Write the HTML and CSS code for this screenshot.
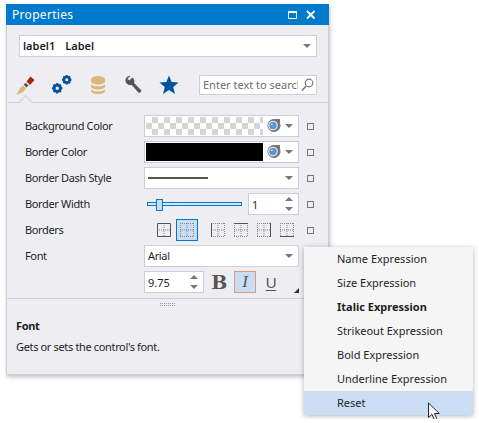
FILE: index.html

```html
<!DOCTYPE html>
<html lang="en">
<head>
    <meta charset="UTF-8">
    <title>Properties</title>
    <link rel="stylesheet" href="styles.css">
</head>
<body>
    <div class="panel">
        <div class="titlebar">
            <span class="title">Properties</span>
            <svg class="win-icons" width="38" height="12" viewBox="0 0 38 12">
                <path d="M1.500 2.500h8v7h-8z" fill="none" stroke="#fff" stroke-width="1"/>
                <path d="M1 3h9" stroke="#fff" stroke-width="2"/>
                <path d="M20 2l7.500 7.500M27.500 2L20 9.500" stroke="#fff" stroke-width="1.800"/>
            </svg>
        </div>

        <div class="combo combo-top">
            <b class="obj-name">label1</b><span class="obj-type">Label</span>
            <i class="arrow"></i>
        </div>

        <div class="tabs">
            <svg class="tab tab-brush" width="22" height="22" viewBox="0 0 22 22">
                <path d="M15.500 2.500l4 3.500-4.500 5-3.500-3.500z" fill="#a1260d"/>
                <path d="M10.500 8.800l3 2.800-1.800 1.900-3-2.800z" fill="#555"/>
                <path d="M8 11.500l3 2.700c-1.500 3-5 5.800-10 6.300 2.500-2 3-6.800 7-9z" fill="#dcb67a"/>
            </svg>
            <svg class="tab tab-gears" width="21" height="21" viewBox="0 0 22 22">
                <g fill="none" stroke="#00539c">
                    <circle cx="6.500" cy="15" r="3.300" stroke-width="3"/>
                    <path d="M6.500 9.500v2M6.500 18.500v2M1 15h2M10 15h2M2.600 11.100l1.400 1.400M9 17.500l1.400 1.400M2.600 18.900L4 17.500M9 12.500l1.400-1.400" stroke-width="2"/>
                    <circle cx="16.500" cy="6" r="3" stroke-width="2.800"/>
                    <path d="M16.500 1v2M16.500 9v2M11.500 6h2M19.500 6h2M13 2.500l1.300 1.300M18.700 8.200L20 9.500M13 9.500l1.300-1.300M18.700 3.800L20 2.500" stroke-width="2"/>
                </g>
            </svg>
            <svg class="tab tab-db" width="16" height="20" viewBox="0 0 16 20">
                <ellipse cx="8" cy="4.500" rx="7" ry="3.500" fill="#dcb67a"/>
                <path d="M1 5h14v1.500c0 2-3.500 3-7 3s-7-1-7-3z" fill="#dcb67a"/>
                <path d="M1 9.500c1.500 1.300 4 1.800 7 1.800s5.500-.5 7-1.800v2c0 2-3.500 3-7 3s-7-1-7-3z" fill="#dcb67a"/>
                <path d="M1 14.500c1.500 1.300 4 1.800 7 1.800s5.500-.5 7-1.800v1.500c0 2-3.500 3-7 3s-7-1-7-3z" fill="#dcb67a"/>
            </svg>
            <svg class="tab tab-wrench" width="19" height="19" viewBox="0 0 20 20">
                <path d="M7 1c-3-.5-5.500 2-5.500 4.500 0 1 .3 1.800.6 2.500 1.500 2.500 4 3 6 2.500l7 8c1 1 3.900-1 3-2.500l-7.500-7.500c.8-2 .3-4.500-1.500-6L5.500 5.500 3.500 4z" fill="#555"/>
            </svg>
            <svg class="tab tab-star" width="20" height="20" viewBox="0 0 20 20">
                <path d="M10 .5l2.600 6.600 7 .4-5.400 4.500 1.800 7L10 15l-6 3.900 1.800-7L.4 7.500l7-.4z" fill="#00539c"/>
            </svg>
            <div class="search">
                <span class="search-text">Enter text to search</span>
                <svg class="search-icon" width="13" height="14" viewBox="0 0 13 14">
                    <circle cx="8" cy="5" r="3.800" fill="none" stroke="#777" stroke-width="1.200"/>
                    <path d="M5.200 8L1 12.500" stroke="#777" stroke-width="1.600"/>
                </svg>
            </div>
        </div>
        <div class="tabline"><span class="notch"></span></div>

        <div class="rows">
            <div class="row">
                <label>Background Color</label>
                <div class="combo editor">
                    <span class="swatch checker"></span>
                    <svg class="eye" width="15" height="15" viewBox="0 0 15 15"><path d="M7 1h7v4A6.500 6.500 0 1 1 7 1z" fill="#777"/><circle cx="7" cy="7.500" r="4.800" fill="#e8eef5"/><circle cx="7" cy="7.500" r="3.700" fill="#5a97cf"/><circle cx="5.800" cy="6.300" r="1" fill="#b9d5ee"/></svg>
                    <i class="arrow"></i>
                </div>
                <span class="marker"></span>
            </div>
            <div class="row">
                <label>Border Color</label>
                <div class="combo editor">
                    <span class="swatch black"></span>
                    <svg class="eye" width="15" height="15" viewBox="0 0 15 15"><path d="M7 1h7v4A6.500 6.500 0 1 1 7 1z" fill="#777"/><circle cx="7" cy="7.500" r="4.800" fill="#e8eef5"/><circle cx="7" cy="7.500" r="3.700" fill="#5a97cf"/><circle cx="5.800" cy="6.300" r="1" fill="#b9d5ee"/></svg>
                    <i class="arrow"></i>
                </div>
                <span class="marker"></span>
            </div>
            <div class="row">
                <label>Border Dash Style</label>
                <div class="combo editor">
                    <span class="dash"></span>
                    <i class="arrow"></i>
                </div>
                <span class="marker"></span>
            </div>
            <div class="row">
                <label>Border Width</label>
                <div class="editor slider-wrap">
                    <div class="slider"><span class="thumb"></span></div>
                    <div class="spin spin-width">
                        <span class="spin-value">1</span>
                        <span class="spin-btns"><i class="up"></i><i class="down"></i></span>
                    </div>
                </div>
                <span class="marker"></span>
            </div>
            <div class="row">
                <label>Borders</label>
                <div class="editor borders">
                    <svg class="bd" width="14" height="14" viewBox="0 0 14 14"><use href="#grid"/><path d="M.5.500h13v13H.5z" fill="none" stroke="#555"/></svg>
                    <div class="bd-on">
                        <svg width="14" height="14" viewBox="0 0 14 14"><use href="#gridfull"/></svg>
                    </div>
                    <span class="sep"></span>
                    <svg class="bd" width="14" height="14" viewBox="0 0 14 14"><use href="#gridfull"/><path d="M.5 0v14" stroke="#555"/></svg>
                    <svg class="bd" width="14" height="14" viewBox="0 0 14 14"><use href="#gridfull"/><path d="M0 .5h14" stroke="#555"/></svg>
                    <svg class="bd" width="14" height="14" viewBox="0 0 14 14"><use href="#gridfull"/><path d="M13.500 0v14" stroke="#555"/></svg>
                    <svg class="bd" width="14" height="14" viewBox="0 0 14 14"><use href="#gridfull"/><path d="M0 13.500h14" stroke="#555"/></svg>
                </div>
                <span class="marker"></span>
            </div>
            <div class="row">
                <label>Font</label>
                <div class="combo editor">
                    <span class="font-name">Arial</span>
                    <i class="arrow"></i>
                </div>
            </div>
            <div class="row">
                <label></label>
                <div class="editor font-tools">
                    <div class="spin spin-size">
                        <span class="spin-value">9.75</span>
                        <span class="spin-btns"><i class="up"></i><i class="down"></i></span>
                    </div>
                    <span class="fbtn fbold">B</span>
                    <span class="fbtn fitalic active">I</span>
                    <span class="fbtn funder">U</span>
                    <i class="corner"></i>
                </div>
            </div>
        </div>

        <div class="splitter"><span class="grip"></span></div>

        <div class="desc">
            <b>Font</b>
            <p>Gets or sets the control's font.</p>
        </div>
    </div>

    <ul class="menu">
        <li>Name Expression</li>
        <li>Size Expression</li>
        <li class="bold">Italic Expression</li>
        <li>Strikeout Expression</li>
        <li>Bold Expression</li>
        <li>Underline Expression</li>
        <li class="hover">Reset</li>
    </ul>

    <svg class="cursor" width="14" height="20" viewBox="0 0 14 20">
        <path d="M1.500 1v14.500l3.500-3.200 2.500 6 2.500-1-2.500-5.800h4.800z" fill="#fff" stroke="#222" stroke-width="1"/>
    </svg>

    <svg width="0" height="0" class="defs">
        <defs>
            <g id="grid">
                <path d="M7 2v11M2 7h11" stroke="#888" stroke-dasharray="1 1" fill="none"/>
            </g>
            <g id="gridfull">
                <path d="M.5 0v14M7 0v14M13.500 0v14M0 .5h14M0 7h14M0 13.500h14" stroke="#888" stroke-dasharray="1 1" fill="none"/>
            </g>
        </defs>
    </svg>
</body>
</html>
```

FILE: styles.css

```css
body {
    margin: 0;
    padding: 4px 0 0 6px;
    background-color: #fff;
    font-family: "Noto Sans", "Open Sans", sans-serif;
    font-size: 11px;
    color: #1e1e1e;
    overflow: hidden;
    height: 419px;
    box-sizing: border-box;
    position: relative;
}
.defs {
    position: absolute;
}

/* panel */
.panel {
    width: 323px;
    height: 371px;
    box-sizing: border-box;
    background-color: #eeeef2;
    border: 1px solid #ccceDB;
    border-top: none;
    box-shadow: 1px 2px 4px rgba(0, 0, 0, 0.25);
    display: flex;
    flex-direction: column;
    letter-spacing: -0.35px;
}
.titlebar {
    height: 21px;
    margin: 0 -1px;
    background-color: #007acc;
    color: #fff;
    display: flex;
    align-items: center;
    justify-content: space-between;
    padding: 0 4px 0 6px;
    font-size: 12px;
    letter-spacing: 0.3px;
}
.win-icons {
    display: block;
}

/* combos */
.combo {
    display: flex;
    align-items: center;
    background-color: #fff;
    border: 1px solid #ccceDB;
    box-sizing: border-box;
    height: 22px;
    position: relative;
    padding-bottom: 1px;
}
.combo-top {
    width: 298px;
    margin: 10px 0 0 12px;
    padding-left: 3px;
    letter-spacing: 0;
    padding-bottom: 2px;
}
.obj-name {
    font-weight: 600;
}
.obj-type {
    font-weight: 600;
    margin-left: 10px;
}
.arrow {
    position: absolute;
    right: 5px;
    top: 8px;
    width: 0;
    height: 0;
    border-left: 4px solid transparent;
    border-right: 4px solid transparent;
    border-top: 4px solid #777;
}

/* tabs */
.tabs {
    display: flex;
    align-items: center;
    height: 21px;
    margin-top: 17px;
    padding-left: 8px;
    position: relative;
}
.tab {
    display: block;
    flex: none;
}
.tab-gears {
    margin-left: 14px;
}
.tab-db {
    margin-left: 18px;
}
.tab-wrench {
    margin-left: 18px;
}
.tab-star {
    margin-left: 16px;
}
.search {
    width: 118px;
    height: 20px;
    margin-left: 20px;
    box-sizing: border-box;
    background-color: #fff;
    border: 1px solid #ccceDB;
    display: flex;
    align-items: center;
    padding: 0 3px;
    overflow: hidden;
    position: relative;
    letter-spacing: 0;
}
.search-text {
    color: #6d6d6d;
    white-space: nowrap;
}
.search-icon {
    position: absolute;
    right: 2px;
    top: 2px;
    background-color: #fff;
    padding-left: 3px;
}
.tabline {
    height: 1px;
    margin: 7px 0 0 1px;
    background-color: #ccceDB;
    position: relative;
}
.notch {
    position: absolute;
    left: 13px;
    top: -5px;
    width: 8px;
    height: 8px;
    background-color: #eeeef2;
    border-left: 1px solid #ccceDB;
    border-top: 1px solid #ccceDB;
    transform: rotate(45deg);
}

/* rows */
.rows {
    margin-top: 12px;
    display: flex;
    flex-direction: column;
    gap: 4px;
}
.row {
    display: flex;
    align-items: center;
    height: 22px;
    padding-left: 18px;
}
.row label {
    width: 119px;
    flex: none;
    padding-bottom: 2px;
}
.editor {
    width: 155px;
    flex: none;
}
.marker {
    width: 7px;
    height: 7px;
    margin-left: 8px;
    box-sizing: border-box;
    border: 1px solid #777;
}
.swatch {
    width: 117px;
    height: 18px;
    margin-left: 1px;
}
.checker {
    background-color: #fff;
    background-image: conic-gradient(#d4d4d4 25%, #fff 0 50%, #d4d4d4 0 75%, #fff 0);
    background-size: 12px 12px;
}
.black {
    background-color: #000;
}
.eye {
    margin-left: 3px;
}
.dash {
    width: 60px;
    height: 2px;
    margin-left: 3px;
    background-color: #555;
}
.font-name {
    margin-left: 3px;
}

/* slider and spin editors */
.slider-wrap {
    display: flex;
    align-items: center;
    justify-content: space-between;
}
.slider {
    width: 95px;
    margin-left: 3px;
    border: 1px solid #007acc;
    background-color: #d4e6f5;
    box-sizing: border-box;
    height: 4px;
    position: relative;
}
.thumb {
    position: absolute;
    left: 8px;
    top: -4px;
    width: 5px;
    height: 10px;
    background-color: #c9def5;
    border: 1px solid #007acc;
}
.spin {
    display: flex;
    align-items: center;
    justify-content: space-between;
    height: 22px;
    box-sizing: border-box;
    background-color: #fff;
    border: 1px solid #ccceDB;
    padding: 0 3px;
    letter-spacing: 0;
}
.spin-width {
    width: 51px;
}
.spin-size {
    width: 60px;
    flex: none;
}
.spin-btns {
    display: flex;
    flex-direction: column;
    gap: 6px;
}
.spin-btns i {
    width: 0;
    height: 0;
    border-left: 4px solid transparent;
    border-right: 4px solid transparent;
    margin-right: 2px;
}
.up {
    border-bottom: 4px solid #777;
}
.down {
    border-top: 4px solid #777;
}

/* borders row */
.borders {
    display: flex;
    align-items: center;
    padding-left: 13px;
    box-sizing: border-box;
}
.bd {
    flex: none;
    margin-right: 9px;
}
.bd-on {
    flex: none;
    width: 22px;
    height: 22px;
    box-sizing: border-box;
    margin-left: -4px;
    background-color: #c9def5;
    border: 1px solid #007acc;
    display: flex;
    align-items: center;
    justify-content: center;
}
.sep {
    width: 1px;
    height: 22px;
    margin: 0 8px 0 5px;
    background-color: #ccceDB;
}

/* font buttons */
.font-tools {
    display: flex;
    align-items: center;
    position: relative;
}
.fbtn {
    width: 22px;
    height: 22px;
    box-sizing: border-box;
    display: flex;
    align-items: center;
    justify-content: center;
    font-size: 17px;
    color: #555;
    margin-left: 4px;
    font-family: "Liberation Serif", serif;
}
.fbold {
    font-family: "DejaVu Serif", serif;
    font-size: 19px;
    font-weight: bold;
    margin-left: 4px;
}
.fitalic {
    font-style: italic;
    margin-left: 4px;
}
.active {
    background-color: #c9def5;
    border: 1px solid #dd9a79;
}
.funder {
    font-family: "Liberation Sans", sans-serif;
    font-size: 15px;
    text-decoration: underline;
    text-underline-offset: 2px;
}
.corner {
    position: absolute;
    right: 0;
    bottom: 0;
    width: 0;
    height: 0;
    border-left: 5px solid transparent;
    border-bottom: 5px solid #333;
}

/* bottom */
.splitter {
    height: 1px;
    margin-top: 5px;
    background-color: #ccceDB;
    position: relative;
}
.grip {
    position: absolute;
    left: 152px;
    top: 5px;
    width: 17px;
    height: 4px;
    background-image: conic-gradient(#999 25%, transparent 0);
    background-size: 2px 2px;
}
.desc {
    padding: 19px 0 0 9px;
}
.desc b {
    font-weight: 700;
    display: block;
}
.desc p {
    margin: 6px 0 0;
}

/* context menu */
.menu {
    position: absolute;
    left: 304px;
    top: 247px;
    width: 169px;
    margin: 0;
    padding: 0;
    list-style: none;
    background-color: #f5f5f5;
    box-shadow: 0 1px 5px rgba(0, 0, 0, 0.3);
}
.menu li {
    height: 24px;
    line-height: 23px;
    padding-left: 33px;
}
.menu .bold {
    font-weight: 700;
}
.menu .hover {
    background-color: #c9def5;
}
.cursor {
    position: absolute;
    left: 427px;
    top: 402px;
}
```
